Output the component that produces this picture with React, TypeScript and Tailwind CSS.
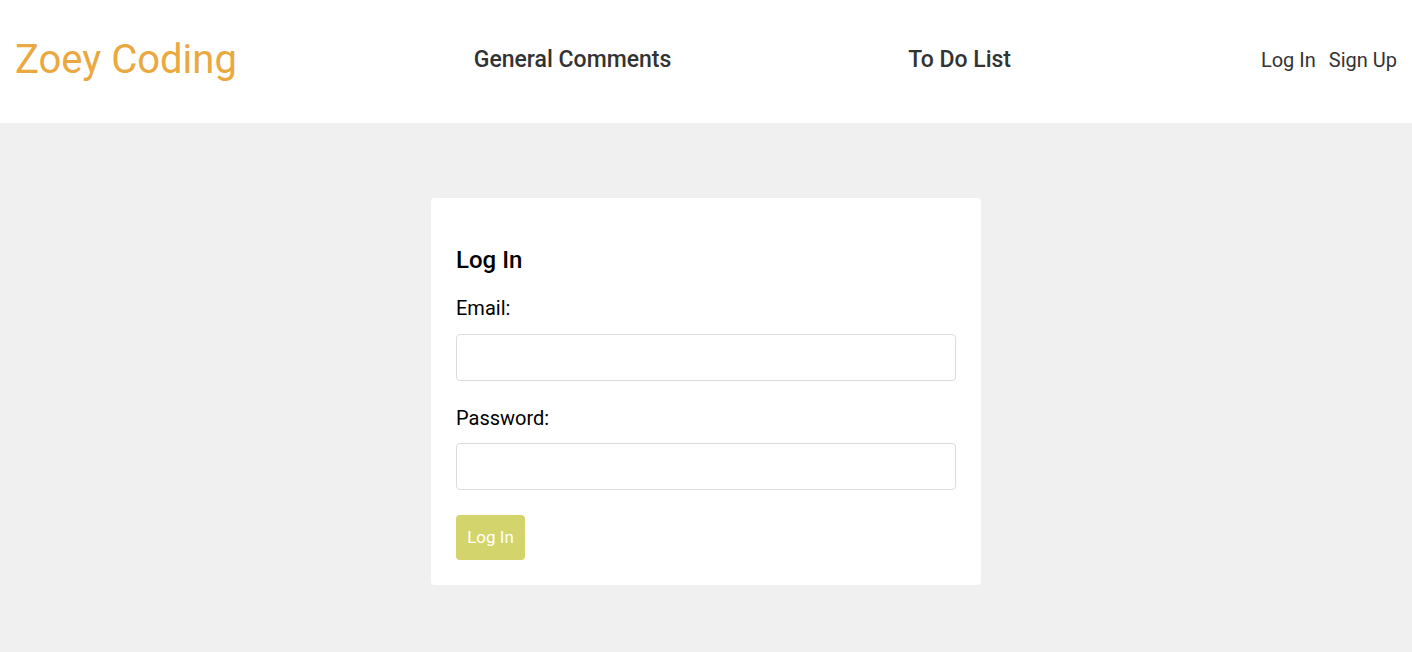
export default function App() {
    return (
        <div className="min-h-screen bg-[#f0f0f0] font-['Roboto',sans-serif]">
            <header className="h-[123px] bg-white flex items-center justify-between px-[15px] pb-[4px]">
                <a href="#" className="text-[40px] leading-[48px] text-[#eaa93f]">Zoey Coding</a>
                <a href="#" className="text-[23px] leading-[28px] font-medium text-[#333]">General Comments</a>
                <a href="#" className="mr-[13px] text-[23px] leading-[28px] font-medium text-[#333]">To Do List</a>
                <div className="flex gap-[13px] text-[20px] leading-[24px] text-[#333]">
                    <a href="#">Log In</a>
                    <a href="#">Sign Up</a>
                </div>
            </header>

            <main className="flex justify-center pt-[75px] pb-10">
                <div className="w-[550px] bg-white rounded-[4px] p-[25px]">
                    <h2 className="mt-[23px] text-[24px] leading-[28px] font-medium text-black">Log In</h2>
                    <form className="flex flex-col">
                        <label className="mt-[23px] text-[20px] leading-[23px] text-black">Email:</label>
                        <input type="email" className="mt-[14px] h-[47px] w-full rounded-[4px] border border-[#dcdcdc] bg-white px-3" />
                        <label className="mt-[26px] text-[20px] leading-[23px] text-black">Password:</label>
                        <input type="password" className="mt-[13px] h-[47px] w-full rounded-[4px] border border-[#dcdcdc] bg-white px-3" />
                        <button type="button" className="mt-[25px] self-start h-[45px] w-[69px] rounded-[4px] bg-[#d4d46c] text-white text-[17px]">
                            Log In
                        </button>
                    </form>
                </div>
            </main>
        </div>
    );
}
